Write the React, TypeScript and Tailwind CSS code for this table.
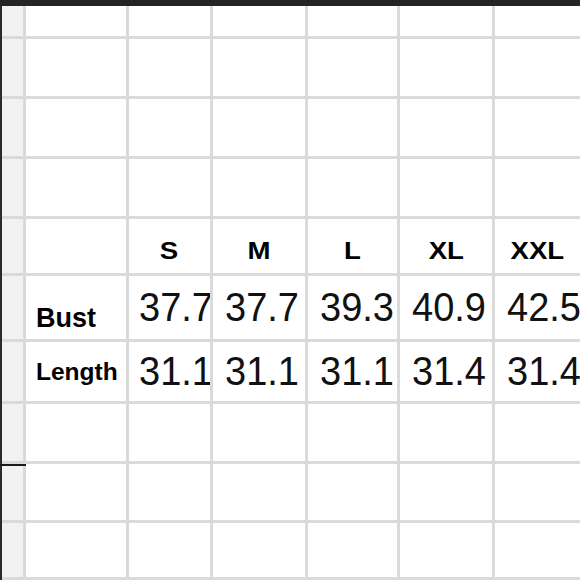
import React from "react";

const rowHeights = "grid-rows-[30px_57px_57px_57px_54px_63px_59px_57px_56px_54px]";

type Cell = { text?: string; kind?: "head" | "label" | "num" | "small" };

const rows: Cell[][] = [
  [{}, {}, {}, {}, {}, {}],
  [{}, {}, {}, {}, {}, {}],
  [{}, {}, {}, {}, {}, {}],
  [{}, {}, {}, {}, {}, {}],
  [
    {},
    { text: "S", kind: "head" },
    { text: "M", kind: "head" },
    { text: "L", kind: "head" },
    { text: "XL", kind: "head" },
    { text: "XXL", kind: "head" },
  ],
  [
    { text: "Bust", kind: "label" },
    { text: "37.7", kind: "num" },
    { text: "37.7", kind: "num" },
    { text: "39.3", kind: "num" },
    { text: "40.9", kind: "num" },
    { text: "42.5", kind: "num" },
  ],
  [
    { text: "Length", kind: "small" },
    { text: "31.1", kind: "num" },
    { text: "31.1", kind: "num" },
    { text: "31.1", kind: "num" },
    { text: "31.4", kind: "num" },
    { text: "31.4", kind: "num" },
  ],
  [{}, {}, {}, {}, {}, {}],
  [{}, {}, {}, {}, {}, {}],
  [{}, {}, {}, {}, {}, {}],
];

function SheetCell({ cell, col }: { cell: Cell; col: number }) {
  if (!cell.text) return <div className="bg-white" />;
  if (cell.kind === "head") {
    return (
      <div className="bg-white flex items-end justify-center pb-[10px] text-[24px] font-bold text-black leading-none">
        <span className="inline-block scale-x-[1.15]">{cell.text}</span>
      </div>
    );
  }
  if (cell.kind === "label") {
    return (
      <div className="bg-white flex items-end pl-[10px] pb-[7px] text-[27px] font-bold text-black leading-none">
        {cell.text}
      </div>
    );
  }
  if (cell.kind === "small") {
    return (
      <div className="bg-white flex items-center pl-[10px] pt-[2px] text-[24.5px] font-bold text-black leading-none">
        {cell.text}
      </div>
    );
  }
  return (
    <div
      className={`bg-white flex items-center pb-[2px] text-[38px] text-[#111] leading-none whitespace-nowrap overflow-hidden ${
        col === 0 ? "pl-[10px]" : "pl-[12px]"
      }`}
    >
      <span className="inline-block scale-y-[1.08]">{cell.text}</span>
    </div>
  );
}

export default function App() {
  return (
    <div className="w-[580px] h-[580px] overflow-hidden bg-[#dadada] font-['Liberation_Sans',Arial,sans-serif]">
      <div className="h-[6px] bg-[#242424]" />
      <div className="flex">
        <div className="w-[2px] bg-[#2a2a2a]" />
        <div
          className={`grid grid-cols-[21px_100px_81px_92px_89px_92px_1fr] ${rowHeights} gap-[3px] flex-1 pb-[3px]`}
        >
          {rows.map((row, r) => (
            <React.Fragment key={r}>
              <div className="relative bg-[#f2f2f2]">
                {r === 8 && (
                  <div className="absolute -left-[2px] top-0 w-[26px] h-[2px] bg-[#1a1a1a]" />
                )}
              </div>
              {row.map((cell, c) => (
                <SheetCell key={c} cell={cell} col={c - 1} />
              ))}
            </React.Fragment>
          ))}
        </div>
      </div>
    </div>
  );
}
